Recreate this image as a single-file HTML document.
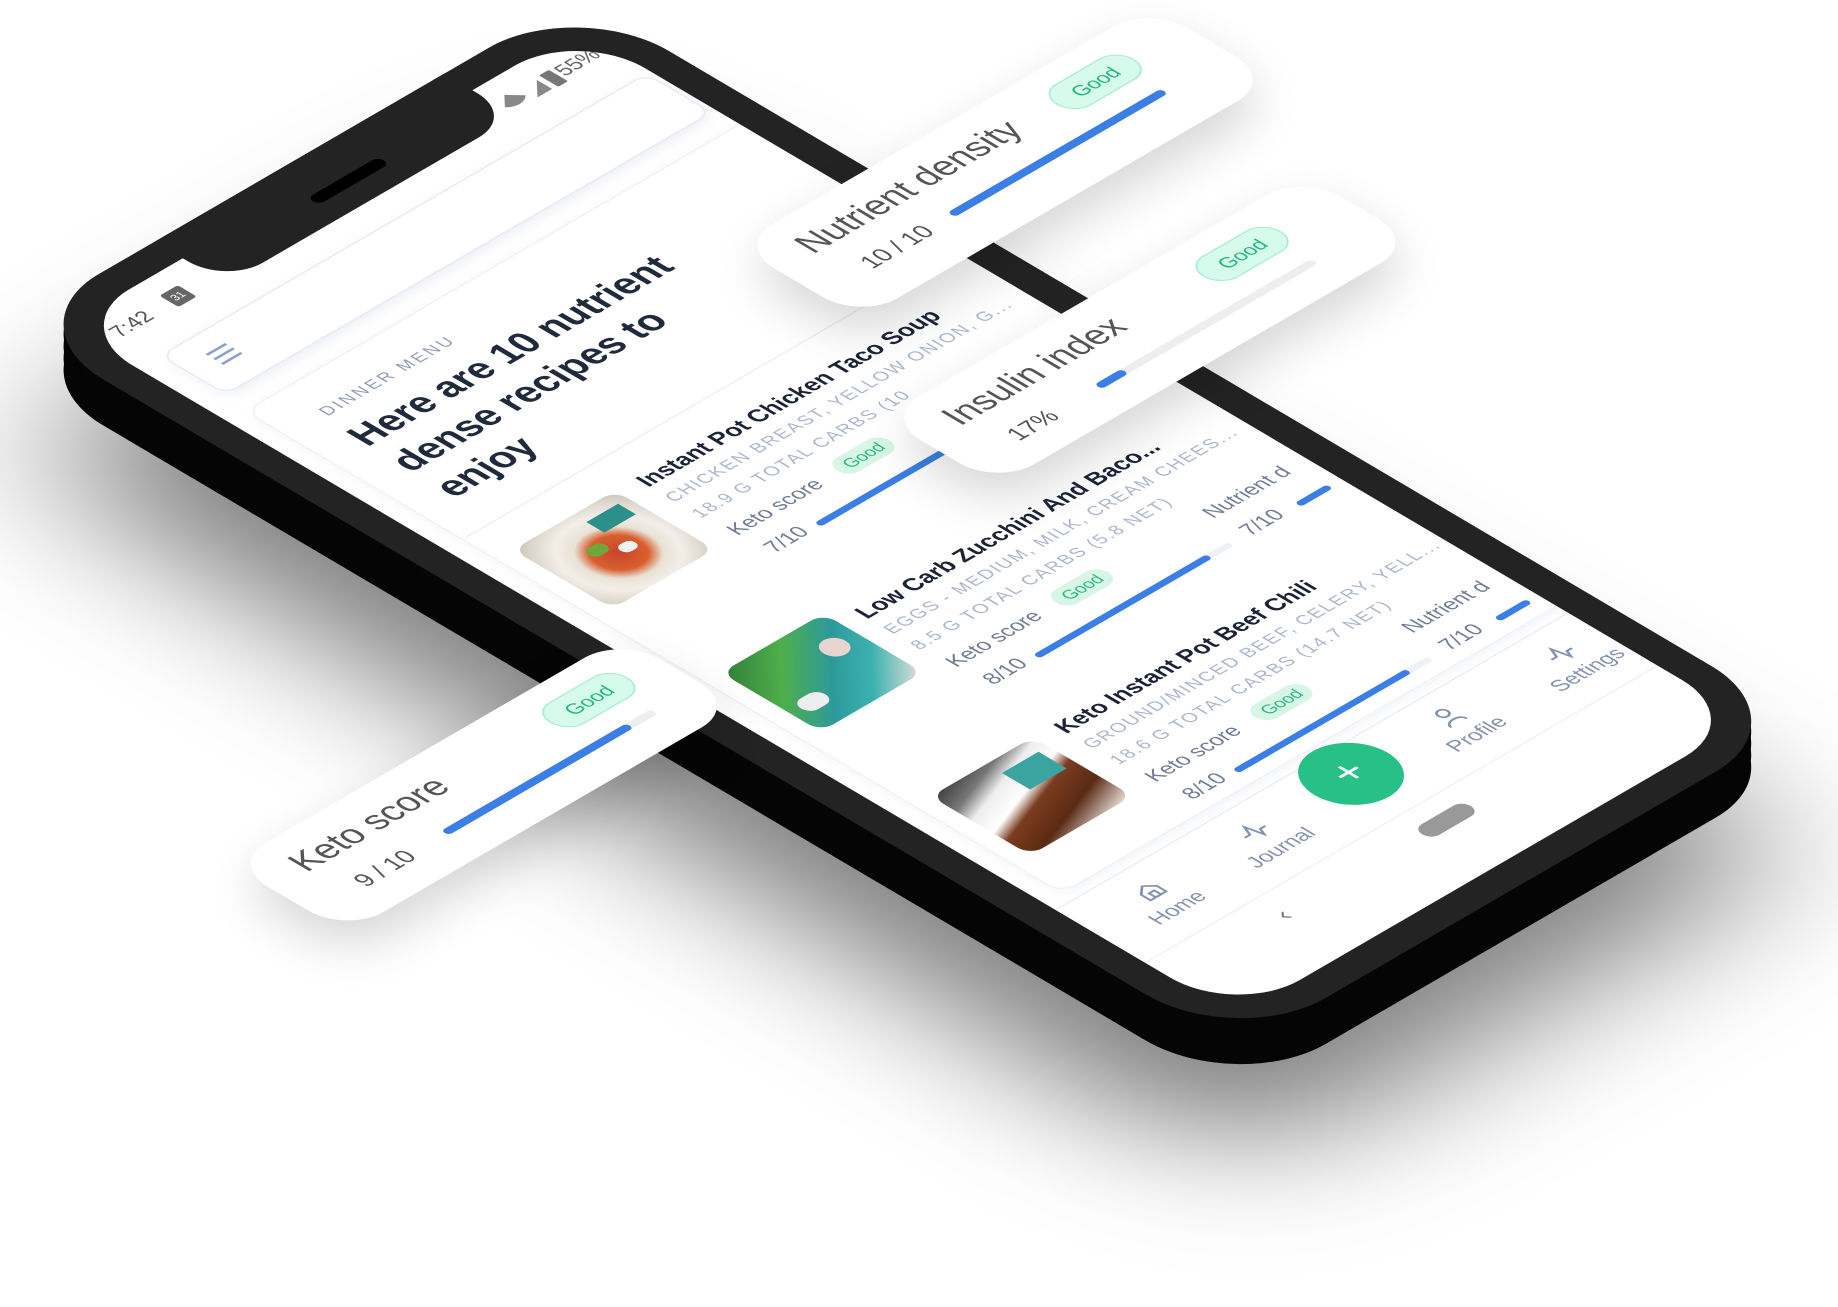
<!DOCTYPE html>
<html><head><meta charset="utf-8">
<style>
*{margin:0;padding:0;box-sizing:border-box}
html,body{width:1838px;height:1307px;background:#fff;overflow:hidden;font-family:"Liberation Sans",sans-serif}
.L{position:absolute;left:0;top:0;width:465px;height:960px;transform-origin:0 0}
.abs{position:absolute}
.side{background:#050505;border-radius:72px}
.face{background:#232323;border-radius:72px}
.screen{position:absolute;left:22px;top:22px;width:421px;height:916px;border-radius:52px;background:#fff;overflow:hidden}
.inner{position:absolute;left:-22px;top:-22px;width:465px;height:960px}
.t{position:absolute;white-space:nowrap}
.title{font-size:16.5px;font-weight:bold;color:#1b2437}
.ing{font-size:12.5px;letter-spacing:1.2px;color:#a8b5cc;text-transform:uppercase}
.lab{font-size:15px;color:#6f7c94}
.pill{position:absolute;background:#d8f6e8;color:#2dbb80;border-radius:10px;font-size:12px;padding:2px 7px}
.bar{position:absolute;height:5px;border-radius:3px;background:#3b7fe6}
.trk{position:absolute;height:5px;border-radius:3px;background:#eef1f6}
.img{position:absolute;width:84px;height:78px;border-radius:10px;overflow:hidden}
.card{position:absolute;background:#fff;border-radius:30px;box-shadow:-14px 16px 34px rgba(0,0,0,.16)}
.card .h{position:absolute;left:26px;top:14px;font-size:25px;color:#555;white-space:nowrap}
.card .s{position:absolute;left:40px;top:54px;font-size:17px;color:#555;white-space:nowrap}
.card .gp{position:absolute;left:232px;top:16px;width:64px;height:28px;border-radius:14px;background:#d6faec;border:1px solid #a9edd0;color:#22b87c;font-size:14px;text-align:center;line-height:26px}
.nav{position:absolute;font-size:15px;color:#8493ad;text-align:center;width:76px}
</style></head><body>

<div class="L" style="transform:translate(0px,130px) matrix(1.217,-0.706,1.278,0.754,11,325);background:rgba(0,0,0,.5);border-radius:80px;filter:blur(55px)"></div>

<div class="L side" style="transform:translate(0px,46px) matrix(1.217,-0.706,1.278,0.754,11,325)"></div>
<div class="L side" style="transform:translate(0px,34px) matrix(1.217,-0.706,1.278,0.754,11,325)"></div>
<div class="L side" style="transform:translate(0px,22px) matrix(1.217,-0.706,1.278,0.754,11,325)"></div>
<div class="L side" style="transform:translate(0px,10px) matrix(1.217,-0.706,1.278,0.754,11,325)"></div>

<div class="L face" style="transform:matrix(1.217,-0.706,1.278,0.754,11,325)">
  <div class="screen"><div class="inner">
    <div class="t" style="left:36px;top:38px;font-size:15px;color:#555">7:42</div>
    <div class="abs" style="left:82px;top:38px;width:15px;height:15px;background:#666;border-radius:2px;color:#fff;font-size:8px;text-align:center;line-height:16px">31</div>
    <div class="abs" style="left:360px;top:40px;width:12px;height:12px;background:#888;border-radius:0 0 12px 0;transform:rotate(45deg)"></div>
    <div class="abs" style="left:378px;top:40px;width:0;height:0;border-left:12px solid transparent;border-bottom:12px solid #888"></div>
    <div class="abs" style="left:394px;top:38px;width:8px;height:15px;background:#777;border-radius:1px"></div>
    <div class="t" style="left:404px;top:36px;font-size:15px;color:#666">55%</div>

    <div class="abs" style="left:40px;top:78px;width:400px;height:52px;border:1px solid #e4eaf3;border-radius:10px;box-shadow:0 3px 8px rgba(120,140,180,.15);background:#fff"></div>
    <div class="abs" style="left:60px;top:95px;width:16px;height:2px;background:#8aa2cc"></div>
    <div class="abs" style="left:60px;top:101px;width:16px;height:2px;background:#8aa2cc"></div>
    <div class="abs" style="left:60px;top:107px;width:16px;height:2px;background:#8aa2cc"></div>

    <div class="abs" style="left:36px;top:148px;width:420px;height:640px;border:1px solid #edf1f7;border-radius:12px;box-shadow:0 2px 8px rgba(120,140,180,.10)"></div>
    <div class="t" style="left:67px;top:173px;font-size:12px;letter-spacing:2px;color:#8d9bb5">DINNER MENU</div>
    <div class="t" style="left:62px;top:194px;font-size:27px;font-weight:bold;color:#1f2a3d;line-height:34px">Here are 10 nutrient<br>dense recipes to<br>enjoy</div>
    <div class="abs" style="left:40px;top:318px;width:400px;height:1px;background:#eaeef5"></div>

    <div class="img" style="left:50px;top:345px;background:radial-gradient(circle at 50% 55%,#c9432a 0,#d8602f 28%,#e9e2d6 42%,#f3efe8 60%,#c9c1b4 100%)"><div class="abs" style="left:28px;top:28px;width:14px;height:10px;background:#6fa83a;border-radius:5px"></div><div class="abs" style="left:44px;top:38px;width:12px;height:9px;background:#f2f2f2;border-radius:5px"></div><div class="abs" style="left:50px;top:10px;width:26px;height:14px;background:#2b8f8a"></div></div>
    <div class="t title" style="left:150px;top:342px">Instant Pot Chicken Taco Soup</div>
    <div class="t ing" style="left:150px;top:365px;width:290px;overflow:hidden;text-overflow:ellipsis">Chicken breast, yellow onion, g...</div>
    <div class="t ing" style="left:150px;top:386px">18.9 g total carbs (10</div>
    <div class="t lab" style="left:153px;top:410px">Keto score</div>
    <div class="pill" style="left:240px;top:409px">Good</div>
    <div class="t lab" style="left:156px;top:436px">7/10</div>
    <div class="trk" style="left:194px;top:444px;width:160px"></div>
    <div class="bar" style="left:194px;top:444px;width:125px"></div>

    <div class="img" style="left:50px;top:508px;background:linear-gradient(135deg,#2f7d3a 0,#4fae4a 30%,#2d9a9a 55%,#3cb1b0 75%,#e9e2dc 100%)"><div class="abs" style="left:8px;top:48px;width:20px;height:14px;background:#eee;border-radius:8px"></div><div class="abs" style="left:56px;top:18px;width:18px;height:18px;background:#e9d5d0;border-radius:9px"></div></div>
    <div class="t title" style="left:148px;top:515px">Low Carb Zucchini And Baco...</div>
    <div class="t ing" style="left:148px;top:538px;width:290px;overflow:hidden;text-overflow:ellipsis">Eggs - medium, milk, cream chees...</div>
    <div class="t ing" style="left:148px;top:559px">8.5 g total carbs (5.8 net)</div>
    <div class="t lab" style="left:151px;top:583px">Keto score</div>
    <div class="pill" style="left:238px;top:582px">Good</div>
    <div class="t lab" style="left:154px;top:609px">8/10</div>
    <div class="trk" style="left:192px;top:617px;width:160px"></div>
    <div class="bar" style="left:192px;top:617px;width:142px"></div>
    <div class="t lab" style="left:362px;top:583px;width:70px;overflow:hidden">Nutrient d</div>
    <div class="t lab" style="left:365px;top:609px">7/10</div>
    <div class="bar" style="left:407px;top:617px;width:26px"></div>

    <div class="img" style="left:50px;top:672px;background:linear-gradient(160deg,#3a3a3a 0,#777 18%,#eee 30%,#fff 45%,#7a3c1e 55%,#5a2a14 75%,#f1ece6 100%)"><div class="abs" style="left:46px;top:12px;width:30px;height:22px;background:#3ba3a0"></div></div>
    <div class="t title" style="left:150px;top:669px">Keto Instant Pot Beef Chili</div>
    <div class="t ing" style="left:150px;top:692px;width:290px;overflow:hidden;text-overflow:ellipsis">Ground/minced beef, celery, yell...</div>
    <div class="t ing" style="left:150px;top:713px">18.6 g total carbs (14.7 net)</div>
    <div class="t lab" style="left:153px;top:737px">Keto score</div>
    <div class="pill" style="left:240px;top:736px">Good</div>
    <div class="t lab" style="left:156px;top:763px">8/10</div>
    <div class="trk" style="left:194px;top:771px;width:160px"></div>
    <div class="bar" style="left:194px;top:771px;width:142px"></div>
    <div class="t lab" style="left:364px;top:737px;width:70px;overflow:hidden">Nutrient d</div>
    <div class="t lab" style="left:367px;top:763px">7/10</div>
    <div class="bar" style="left:409px;top:771px;width:26px"></div>

    <div class="abs" style="left:22px;top:796px;width:421px;height:64px;background:#fff;border-top:1px solid #e9edf3"></div>
    <svg class="abs" style="left:66px;top:812px" width="17" height="17" viewBox="0 0 16 16" fill="none" stroke="#8493ad" stroke-width="1.5"><path d="M2 7 L8 2 L14 7 V14 H2 Z M6 14 V9 H10 V14"/></svg>
    <div class="nav" style="left:36px;top:834px">Home</div>
    <svg class="abs" style="left:150px;top:812px" width="19" height="17" viewBox="0 0 18 16" fill="none" stroke="#8493ad" stroke-width="1.5"><path d="M1 9 H5 L8 2 L11 14 L13 9 H17"/></svg>
    <div class="nav" style="left:121px;top:834px">Journal</div>
    <svg class="abs" style="left:312px;top:810px" width="17" height="19" viewBox="0 0 16 18" fill="none" stroke="#8493ad" stroke-width="1.5"><circle cx="8" cy="5" r="3.5"/><path d="M2 17 C2 11 14 11 14 17"/></svg>
    <div class="nav" style="left:282px;top:834px">Profile</div>
    <svg class="abs" style="left:402px;top:812px" width="19" height="17" viewBox="0 0 18 16" fill="none" stroke="#8493ad" stroke-width="1.5"><path d="M1 9 H5 L8 2 L11 14 L13 9 H17"/></svg>
    <div class="nav" style="left:373px;top:834px">Settings</div>
    <div class="abs" style="left:210px;top:790px;width:60px;height:60px;border-radius:30px;background:#27c087;color:#fff;font-size:30px;text-align:center;line-height:58px">+</div>
    <div class="abs" style="left:22px;top:866px;width:421px;height:1px;background:#eef0f4"></div>
    <div class="t" style="left:110px;top:878px;font-size:18px;color:#777">‹</div>
    <div class="abs" style="left:227px;top:881px;width:40px;height:14px;border-radius:7px;background:#999"></div>
  </div></div>
  <div class="abs" style="left:118px;top:0;width:238px;height:56px;background:#232323;border-radius:0 0 30px 30px"></div>
  <div class="abs" style="left:212px;top:30px;width:58px;height:9px;background:#000;border-radius:5px"></div>

  <div class="card" style="left:356px;top:228px;width:340px;height:98px">
    <div class="h">Nutrient density</div>
    <div class="s">10 / 10</div>
    <div class="gp">Good</div>
    <div class="bar" style="left:111px;top:60px;width:175px;height:6px"></div>
  </div>
  <div class="card" style="left:296px;top:400px;width:345px;height:90px">
    <div class="h">Insulin index</div>
    <div class="s">17%</div>
    <div class="gp">Good</div>
    <div class="trk" style="left:111px;top:60px;width:178px;height:6px;background:#eee"></div>
    <div class="bar" style="left:111px;top:60px;width:22px;height:6px"></div>
  </div>
  <div class="card" style="left:-288px;top:445px;width:322px;height:92px">
    <div class="h">Keto score</div>
    <div class="s">9 / 10</div>
    <div class="gp">Good</div>
    <div class="trk" style="left:111px;top:60px;width:172px;height:6px;background:#eee"></div>
    <div class="bar" style="left:111px;top:60px;width:152px;height:6px"></div>
  </div>
</div>
</body></html>
